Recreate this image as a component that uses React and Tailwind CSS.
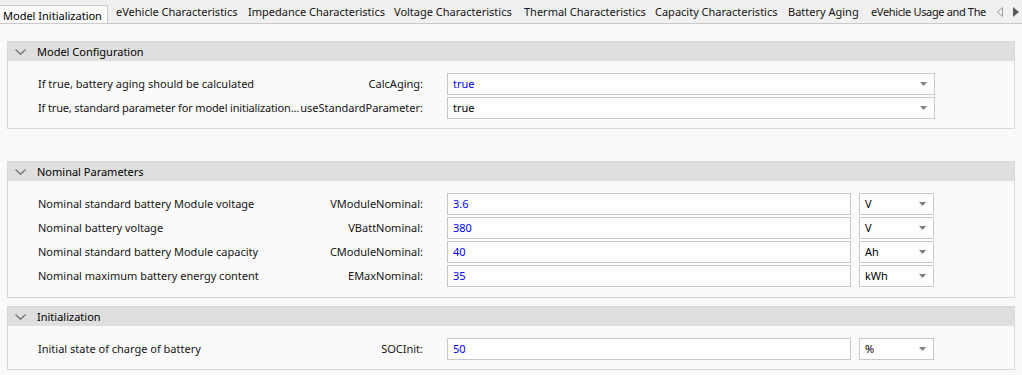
import React from 'react';

const tabs = [
  { label: 'eVehicle Characteristics', w: 'w-[132px]' },
  { label: 'Impedance Characteristics', w: 'w-[146px]' },
  { label: 'Voltage Characteristics', w: 'w-[130px]' },
  { label: 'Thermal Characteristics', w: 'w-[131px]' },
  { label: 'Capacity Characteristics', w: 'w-[133px]' },
  { label: 'Battery Aging', w: 'w-[83px]' },
  { label: 'eVehicle Usage and The', w: 'w-[126px] tracking-[-0.35px]' },
];

function Chevron() {
  return (
    <svg width="11" height="6" viewBox="0 0 11 6" className="shrink-0">
      <path d="M0.5 0.5 L5.5 5.3 L10.5 0.5" fill="none" stroke="#6e6e6e" strokeWidth="1.2" />
    </svg>
  );
}

function DropArrow() {
  return (
    <svg width="7" height="4" viewBox="0 0 7 4" className="shrink-0">
      <polygon points="0,0 7,0 3.5,4" fill="#808080" />
    </svg>
  );
}

function Section({ title, children, className = '', bodyClass = 'pb-[8px]' }) {
  return (
    <div className={'border border-[#d8d8d8] bg-[#fafafa] ' + className}>
      <div className="h-[19px] bg-[#dfdfdf] flex items-center pl-[7px]">
        <Chevron />
        <span className="ml-[11px] text-black -mt-px">{title}</span>
      </div>
      <div className={'pt-[11px] ' + bodyClass}>{children}</div>
    </div>
  );
}

function Field({ value, blue, dropdown, className }) {
  return (
    <div className={'h-[22px] bg-white border border-[#c8c8c8] flex items-center pl-[5px] pr-[7px] ' + className}>
      <span className={'flex-1 -mt-px ' + (blue ? 'text-[#0000ff]' : 'text-black')}>{value}</span>
      {dropdown && <DropArrow />}
    </div>
  );
}

function Row({ desc, name, value, blue = true, unit, dropdown, tight }) {
  return (
    <div className="h-[24px] flex items-center">
      <div className="w-[439px] shrink-0 pl-[30px] pr-[24px] flex items-center text-[#141414] -mt-px">
        <span className={'flex-1 min-w-0 whitespace-nowrap ' + (tight ? 'tracking-[-0.15px]' : '')}>{desc}</span>
        <span className="shrink-0 text-right">{name}</span>
      </div>
      {unit ? (
        <div className="flex gap-[8px]">
          <Field value={value} blue={blue} className="w-[404px]" />
          <Field value={unit} dropdown className="w-[75px]" />
        </div>
      ) : (
        <Field value={value} blue={blue} dropdown={dropdown} className="w-[488px]" />
      )}
    </div>
  );
}

export default function App() {
  return (
    <div
      className="w-[1022px] h-[375px] bg-[#f9f9f9] overflow-hidden text-[11px] leading-[15px]"
      style={{ fontFamily: '"Noto Sans", "Open Sans", sans-serif' }}
    >
      {/* Tab strip */}
      <div className="h-[24px] bg-[#f0f0f0] border-b border-[#c9c9c9] flex items-end">
        <div className="flex-1 min-w-0 flex items-end overflow-hidden h-full">
          <div className="w-[108px] shrink-0 h-[19px] -mb-px bg-[#fafafa] border-t border-r border-[#c9c9c9] flex items-center pl-[3px] text-black">
            Model Initialization
          </div>
          {tabs.map((t) => (
            <div key={t.label} className={'shrink-0 h-full flex items-center pl-[8px] whitespace-nowrap text-[#141414] ' + t.w}>
              {t.label}
            </div>
          ))}
        </div>
        <div className="w-[28px] shrink-0 h-full flex items-center justify-center gap-[10px] bg-[#f0f0f0]">
          <svg width="6" height="10" viewBox="0 0 6 10">
            <polygon points="5.5,0.5 0.5,5 5.5,9.5" fill="none" stroke="#9a9a9a" strokeWidth="1" />
          </svg>
          <svg width="6" height="10" viewBox="0 0 6 10">
            <polygon points="0,0 6,5 0,10" fill="#5a5a5a" />
          </svg>
        </div>
      </div>

      {/* Content */}
      <div className="px-[7px] pt-[17px]">
        <Section title="Model Configuration">
          <Row desc="If true, battery aging should be calculated" name="CalcAging:" value="true" dropdown />
          <Row desc="If true, standard parameter for model initialization..." name="useStandardParameter:" value="true" blue={false} dropdown tight />
        </Section>

        <Section title="Nominal Parameters" className="mt-[32px]" bodyClass="pb-[9px]">
          <Row desc="Nominal standard battery Module voltage" name="VModuleNominal:" value="3.6" unit="V" />
          <Row desc="Nominal battery voltage" name="VBattNominal:" value="380" unit="V" />
          <Row desc="Nominal standard battery Module capacity" name="CModuleNominal:" value="40" unit="Ah" />
          <Row desc="Nominal maximum battery energy content" name="EMaxNominal:" value="35" unit="kWh" />
        </Section>

        <Section title="Initialization" className="mt-[8px]">
          <Row desc="Initial state of charge of battery" name="SOCInit:" value="50" unit="%" />
        </Section>
      </div>
    </div>
  );
}
